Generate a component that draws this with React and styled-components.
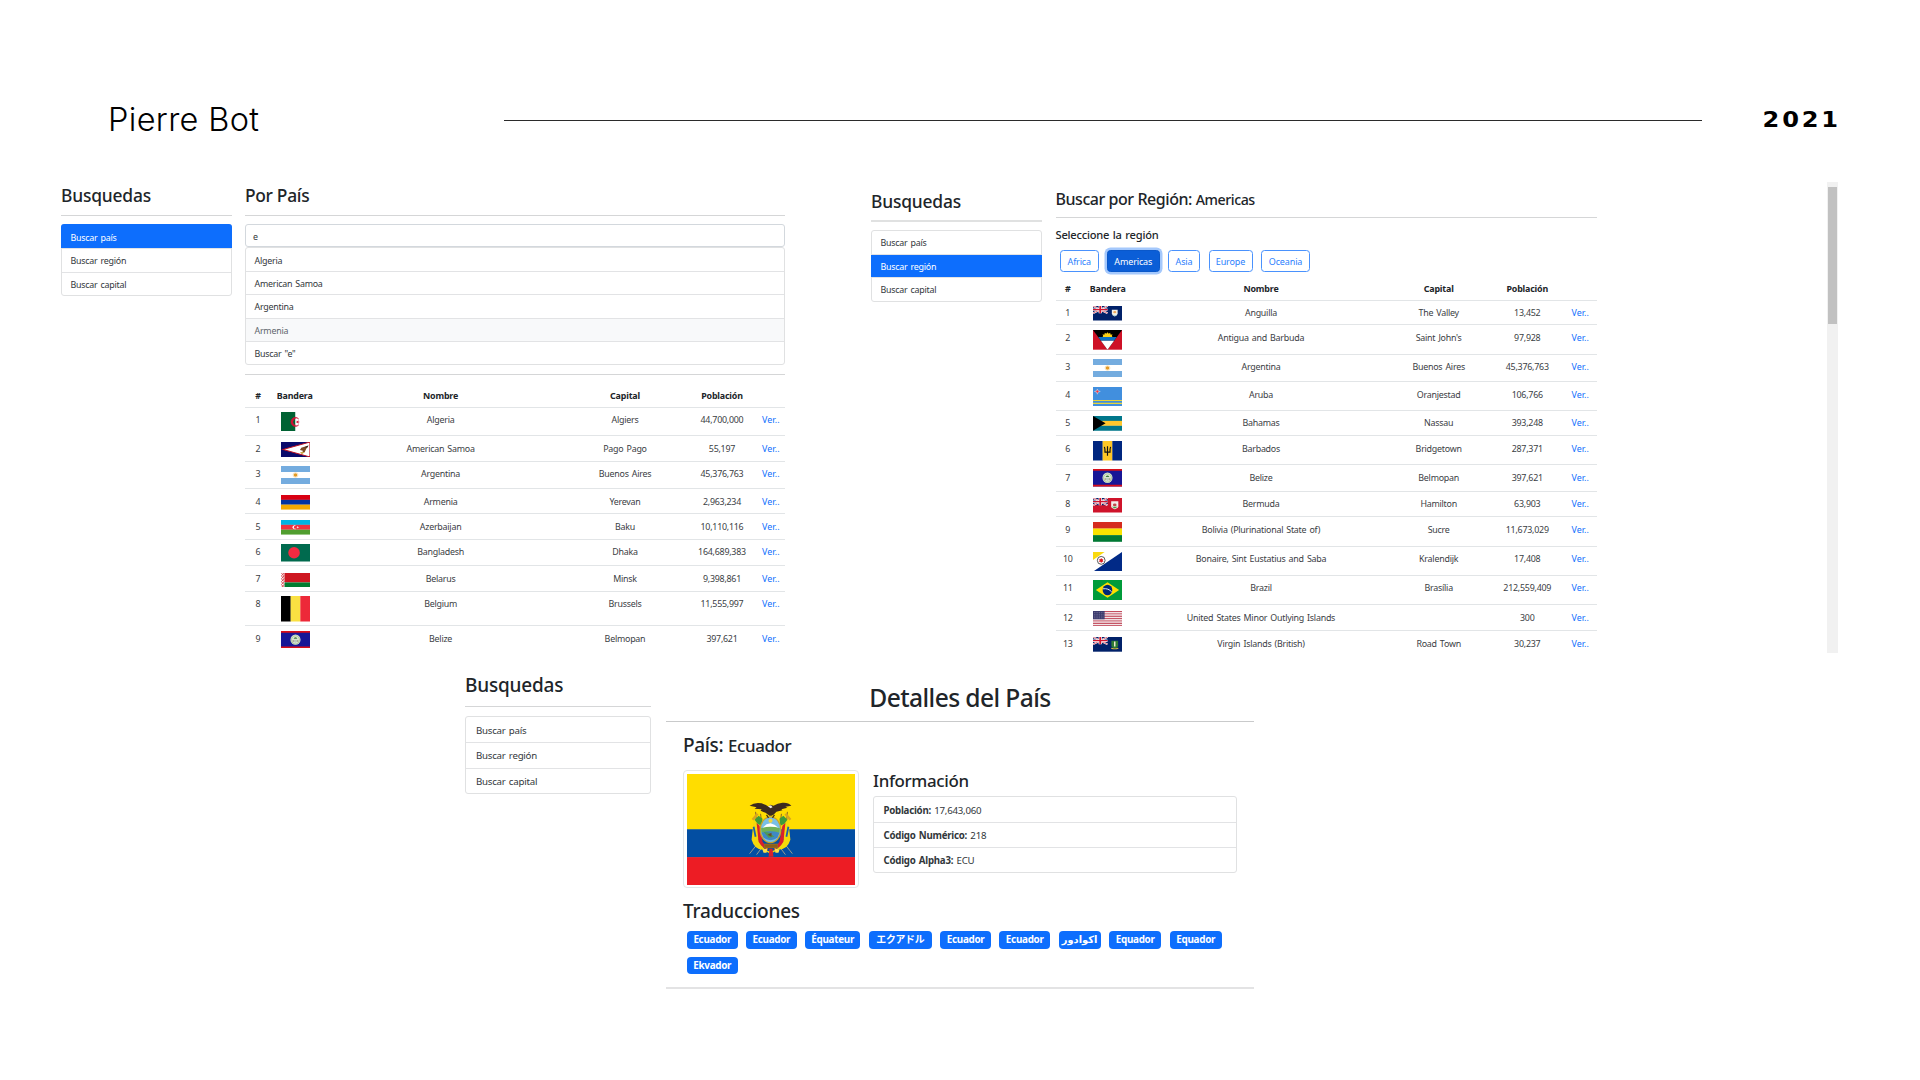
import React from "react";
import styled, { createGlobalStyle, css } from "styled-components";

const GlobalStyle = createGlobalStyle`
  *, *::before, *::after { box-sizing: border-box; }
  body {
    margin: 0;
    background: #fff;
    color: #212529;
    font-family: "Noto Sans", "Open Sans", "Noto Sans CJK JP", "DejaVu Sans", sans-serif;
    letter-spacing: -0.015em;
    word-spacing: 1px;
  }
`;

const Page = styled.div`
  width: 1920px;
  height: 1080px;
  display: flex;
  flex-direction: column;
  overflow: hidden;
  background: #fff;
`;

const Header = styled.header`
  height: 182px;
  flex: none;
  display: flex;
  align-items: center;
  padding: 58px 79px 0 108px;
`;

const Author = styled.div`
  width: 396px;
  font-family: Inter, sans-serif;
  font-weight: 300;
  font-size: 32.5px;
  line-height: 40px;
  letter-spacing: 0.01em;
  word-spacing: 0;
  color: #000;
`;

const Rule = styled.div`
  width: 1198px;
  height: 1px;
  margin-top: 1px;
  background: #2b2b2b;
`;

const Year = styled.div`
  margin-left: auto;
  font-family: "DejaVu Sans", sans-serif;
  font-weight: 700;
  font-size: 21.5px;
  line-height: 30px;
  letter-spacing: 2.5px;
  margin-right: 0;
  transform: scaleX(1.12);
  transform-origin: right center;
  color: #000;
`;

const TopRow = styled.section`
  height: 471px;
  flex: none;
  display: flex;
  padding: 0 82px 0 61px;
  overflow: hidden;
`;

const Panel = styled.div`
  display: flex;
  gap: ${(p) => p.$gap}px;
  margin-left: ${(p) => p.$left || 0}px;
`;

const Side = styled.aside`
  width: ${(p) => p.$w}px;
  flex: none;
`;

const Main = styled.main`
  width: ${(p) => p.$w}px;
  flex: none;
`;

const Heading = styled.h2`
  margin: 0 0 ${(p) => p.$b || 0}px;
  padding-top: ${(p) => p.$t || 0}px;
  font-weight: 500;
  font-size: ${(p) => p.$size}px;
  line-height: ${(p) => p.$h}px;
  text-align: ${(p) => (p.$center ? "center" : "left")};
  letter-spacing: ${(p) => p.$ls ?? -0.024}em;
  word-spacing: 0;
  white-space: nowrap;
`;

const Smaller = styled.span`
  font-size: ${(p) => p.$size}px;
  line-height: 1;
`;

const Hr = styled.hr`
  border: 0;
  margin: ${(p) => p.$t}px 0 ${(p) => p.$b}px;
  height: ${(p) => p.$thick || 1}px;
  background: ${(p) => p.$color || "#d5d6d7"};
`;

const List = styled.ul`
  list-style: none;
  margin: 0;
  padding: 0;
  height: ${(p) => p.$h}px;
  display: grid;
  grid-auto-rows: 1fr;
  border: 1px solid #e0e1e2;
  border-radius: 3px;
`;

const Item = styled.li`
  display: flex;
  align-items: center;
  padding: 1px 0 0 ${(p) => p.$pad || 8.5}px;
  font-size: ${(p) => p.$size || 8.9}px;
  color: #32373b;
  white-space: pre;
  & + & { border-top: 1px solid #e2e3e5; }
  ${(p) => p.$active && css`
    background: #0d6efd;
    color: #fff;
    margin: ${p.$first ? "-1px -1px 0" : "0 -1px"};
    border-radius: ${p.$first ? "3px 3px 0 0" : "0"};
    padding-top: ${p.$first ? 3 : 1}px;
    padding-left: ${(p.$pad || 8.5) + 1}px;
    && { border-top-color: #0d6efd; }
    & + & { border-top-color: #0d6efd; }
  `}
  ${(p) => p.$hover && css`
    background: #f8f9fa;
    color: #5f666c;
  `}
`;

const SearchBox = styled.div`
  height: 23px;
  display: flex;
  align-items: center;
  padding: 1px 0 0 7px;
  border: 1px solid #d3d8dd;
  border-radius: 3px;
  font-size: 8.9px;
  color: #32373b;
`;

const Table = styled.div`
  font-size: 8.9px;
  line-height: 17px;
  color: #3b4044;
  text-align: center;
`;

const Row = styled.div`
  display: grid;
  grid-template-columns: ${(p) => p.$cols};
  height: ${(p) => p.$h}px;
  padding-top: ${(p) => p.$t}px;
  border-bottom: 1px solid ${(p) => (p.$last ? "transparent" : "#e2e5e7")};
  white-space: nowrap;
`;

const HeadRow = styled(Row)`
  font-weight: 700;
  color: #212529;
  letter-spacing: -0.02em;
`;

const Link = styled.a`
  color: #0d6efd;
  letter-spacing: 0.01em;
`;

const FlagCell = styled.div`
  display: flex;
  justify-content: center;
  align-items: flex-start;
  height: 0;
  margin-top: ${(p) => p.$dy}px;
  padding-left: ${(p) => p.$shift || 0}px;
`;

const Label = styled.div`
  font-weight: 500;
  font-size: 11.1px;
  line-height: 20px;
  height: 25px;
  letter-spacing: -0.02em;
`;

const Regions = styled.div`
  display: flex;
  height: 22px;
  padding-left: 4.5px;
  gap: 8.5px;
`;

const RegionButton = styled.button`
  width: ${(p) => p.$w}px;
  height: 22px;
  padding: 0;
  font: inherit;
  font-size: 9px;
  letter-spacing: -0.015em;
  border: 1px solid #4a92fd;
  border-radius: 3.5px;
  background: #fff;
  color: #2b80fd;
  ${(p) => p.$active && css`
    background: #0b5ed7;
    border-color: #0a58ca;
    color: #fff;
    box-shadow: 0 0 0 2.5px #a4c8fc;
  `}
`;

const ScrollTrack = styled.div`
  width: 11px;
  height: 471px;
  margin-left: auto;
  padding: 5px 1px 0;
  background: #f1f1f1;
`;

const ScrollThumb = styled.div`
  height: 137px;
  background: #c1c1c1;
`;

const DetailRow = styled.section`
  display: flex;
  padding-left: 465px;
  gap: 15px;
`;

const DetailBody = styled.div`
  padding: 0 17px;
`;

const DetailColumns = styled.div`
  display: flex;
  gap: 14px;
  height: 118px;
`;

const Thumb = styled.div`
  width: 176px;
  height: 118px;
  padding: 3px;
  border: 1px solid #e3e6e8;
  border-radius: 4px;
  svg { display: block; }
`;

const Info = styled.div`
  width: 365px;
`;

const Badges = styled.div`
  display: flex;
  flex-wrap: wrap;
  gap: 8px 8.6px;
  padding-left: 4px;
  height: 56px;
  align-content: flex-start;
`;

const Badge = styled.span`
  width: ${(p) => p.$w}px;
  height: 17.5px;
  border-radius: 4px;
  background: #0d6efd;
  color: #fff;
  font-weight: 700;
  font-size: 9.9px;
  line-height: 17px;
  text-align: center;
  letter-spacing: -0.03em;
  white-space: nowrap;
`;

const Strip = ({ colors, vertical }) =>
  colors.map((c, i) =>
    vertical ? (
      <rect key={i} x={(30 * i) / colors.length} width={30 / colors.length + 0.1} height="20" fill={c} />
    ) : (
      <rect key={i} y={(20 * i) / colors.length} width="30" height={20 / colors.length + 0.1} fill={c} />
    )
  );

const UnionJack = () => (
  <g>
    <rect width="15" height="10" fill="#012169" />
    <path d="M0 0L15 10M15 0L0 10" stroke="#fff" strokeWidth="2.2" />
    <path d="M0 0L15 10M15 0L0 10" stroke="#d8324a" strokeWidth=".8" />
    <path d="M7.5 0V10M0 5H15" stroke="#fff" strokeWidth="3.4" />
    <path d="M7.5 0V10M0 5H15" stroke="#d0142f" strokeWidth="1.9" />
  </g>
);

const Belize = () => (
  <g>
    <rect width="30" height="20" fill="#171696" />
    <path d="M0 1H30M0 19H30" stroke="#d90f19" strokeWidth="2" />
    <ellipse cx="15" cy="10" rx="5.2" ry="6" fill="#dfe9d6" />
    <ellipse cx="15" cy="10.3" rx="4" ry="4.7" fill="none" stroke="#8db47d" strokeWidth=".7" />
    <path d="M12.8 10h4.4v2L15 13.8 12.8 12z" fill="#b9cbbd" />
    <path d="M13 9q2-3.4 4 0z" fill="#3e7b3a" />
    <path d="M12.6 10.5v2.5M17.4 10.5v2.5" stroke="#8a6a4c" strokeWidth=".7" />
  </g>
);

const FLAGS = {
  dz: (
    <g>
      <rect width="15" height="20" fill="#006233" />
      <rect x="15" width="15" height="20" fill="#fff" />
      <path d="M18.4 7.2A4.6 4.7 0 1 0 18.4 13.2A3.7 3.8 0 1 1 18.4 7.2z" fill="#d21034" stroke="#d21034" strokeWidth=".5" />
      <path d="M19.6 10.2l-4 1.2 2.4-3.2v4l-2.4-3.2z" fill="#d21034" />
    </g>
  ),
  as: (
    <g>
      <rect width="30" height="20" fill="#0a0a6b" />
      <path d="M30 0L2 10L30 20z" fill="#fff" stroke="#bd1021" strokeWidth="1.2" />
      <path d="M21 7.5L28.4 4.5L26 9.2L24.5 13.6L22 14.6L22.6 11.6L19.6 10.5z" fill="#7d4a25" />
      <path d="M24 7L28.4 4.5L27.4 7.4z" fill="#35251c" />
      <path d="M19.6 13.2l5 .6-3 2.6z" fill="#c9a03c" />
    </g>
  ),
  ar: (
    <g>
      <Strip colors={["#74acdf", "#fff", "#74acdf"]} />
      <circle cx="15" cy="10" r="1.9" fill="#e39a26" />
      <circle cx="15" cy="10" r="2.5" fill="none" stroke="#f0c36b" strokeWidth=".5" />
    </g>
  ),
  am: <Strip colors={["#d90012", "#0033a0", "#f2a800"]} />,
  az: (
    <g>
      <Strip colors={["#00b5e2", "#ef3340", "#509e2f"]} />
      <path d="M15.9 8A2.5 2.6 0 1 0 15.9 12A2 2.1 0 1 1 15.9 8z" fill="#fff" />
      <path d="M17.3 8.4l.5 1.1 1.2.5-1.2.5-.5 1.1-.5-1.1-1-.5 1-.5z" fill="#fff" />
    </g>
  ),
  bd: (
    <g>
      <rect width="30" height="20" fill="#006a4e" />
      <ellipse cx="13.5" cy="10" rx="6" ry="6.6" fill="#f42a41" />
    </g>
  ),
  by: (
    <g>
      <rect width="30" height="13" fill="#ce1720" />
      <rect y="13" width="30" height="7" fill="#007c30" />
      <rect width="3.6" height="20" fill="#fff" />
      <path d="M.4 0L3.2 4 .4 8 3.2 12 .4 16 3.2 20M3.2 0L.4 4 3.2 8 .4 12 3.2 16 .4 20" stroke="#cf3a40" strokeWidth="1" fill="none" />
    </g>
  ),
  be: <Strip vertical colors={["#000", "#fae042", "#ed2939"]} />,
  bz: <Belize />,
  ai: (
    <g>
      <rect width="30" height="20" fill="#012169" />
      <UnionJack />
      <path d="M19.5 5.2h6v5q0 3-3 4.2-3-1.2-3-4.2z" fill="#f4f1e6" />
      <circle cx="22.5" cy="8.5" r="1.6" fill="#f0a85a" />
      <path d="M20.4 12.2q2.1 1 4.2 0l-2.1 1.8z" fill="#8fd0da" />
    </g>
  ),
  ag: (
    <g>
      <rect width="30" height="20" fill="#ce1126" />
      <path d="M0 0H30L15 20z" fill="#000" />
      <path d="M9.5 7.5L10.5 6l-.6-1.6 1.8.3.6-1.8 1.4 1L15 2.2l1.3 1.7 1.4-1 .6 1.8 1.8-.3-.6 1.6 1 1.5z" fill="#fcd116" />
      <path d="M5.4 7.2H24.6L21.8 11H8.2z" fill="#0c72c6" />
      <path d="M8.2 11H21.8L15 20z" fill="#fff" />
    </g>
  ),
  aw: (
    <g>
      <rect width="30" height="20" fill="#418fde" />
      <path d="M0 14H30M0 17H30" stroke="#e8d53a" strokeWidth="1.1" />
      <path d="M4.5 2L5.3 4 7.5 4.6 5.3 5.3 4.5 7.5 3.7 5.3 1.5 4.6 3.7 4z" fill="#ef3340" stroke="#fff" strokeWidth=".4" />
    </g>
  ),
  bs: (
    <g>
      <Strip colors={["#00778b", "#ffc72c", "#00778b"]} />
      <path d="M0 0L13 10L0 20z" fill="#000" />
    </g>
  ),
  bb: (
    <g>
      <Strip vertical colors={["#00267f", "#ffc726", "#00267f"]} />
      <path d="M11.8 6q.8 2 .6 5.4H17.6q-.2-3.4.6-5.4M15 5.5V15" stroke="#111" strokeWidth="1.2" fill="none" />
    </g>
  ),
  bm: (
    <g>
      <rect width="30" height="20" fill="#cf142b" />
      <UnionJack />
      <path d="M18.8 4.5h7.4v7q0 2.6-3.7 4-3.7-1.4-3.7-4z" fill="#f3efe9" />
      <circle cx="22.5" cy="9.5" r="1.9" fill="#c4484a" />
      <path d="M19.4 12.2h6.2l-3.1 2.4z" fill="#4d9a4a" />
    </g>
  ),
  bo: <Strip colors={["#d52b1e", "#f9e300", "#007934"]} />,
  bq: (
    <g>
      <rect width="30" height="20" fill="#fff" />
      <path d="M30 0V20H0z" fill="#012a87" />
      <path d="M0 0H12L0 8z" fill="#f9d90f" />
      <circle cx="8.5" cy="8.5" r="4" fill="#fff" stroke="#444" strokeWidth=".9" />
      <path d="M8.5 6l.8 1.3h1.5l-.7 1.2.7 1.3H9.3l-.8 1.3-.8-1.3H6.2l.7-1.3-.7-1.2h1.5z" fill="#dc171d" />
    </g>
  ),
  br: (
    <g>
      <rect width="30" height="20" fill="#009b3a" />
      <path d="M15 2.2L27 10 15 17.8 3 10z" fill="#fedf00" />
      <ellipse cx="15" cy="10" rx="5" ry="5.2" fill="#002776" />
      <path d="M10.3 8.8Q16 8 19.4 12" stroke="#dfe9f2" strokeWidth="1" fill="none" />
    </g>
  ),
  um: (
    <g>
      <Strip colors={["#c24d5e", "#f2e4e7", "#c24d5e", "#f2e4e7", "#c24d5e", "#f2e4e7", "#c24d5e", "#f2e4e7", "#c24d5e", "#f2e4e7", "#c24d5e", "#f2e4e7", "#c24d5e"]} />
      <rect width="12" height="10.8" fill="#3c3b6e" />
      <path d="M1 2H11.5M1 4.3H11.5M1 6.6H11.5M1 8.9H11.5" stroke="#8d8cab" strokeWidth=".8" strokeDasharray=".8 1" />
    </g>
  ),
  vg: (
    <g>
      <rect width="30" height="20" fill="#012169" />
      <UnionJack />
      <path d="M19 5h7v6.5q0 2.8-3.5 4.5-3.5-1.7-3.5-4.5z" fill="#2f7b34" />
      <path d="M22.5 6v7" stroke="#f1ead8" strokeWidth="1.5" />
      <path d="M18.8 15q3.7 2.4 7.4 0" stroke="#e2c13c" strokeWidth="1.2" fill="none" />
    </g>
  ),
};

const Flag = ({ code, h }) => (
  <svg width="29" height={h} viewBox="0 0 30 20" preserveAspectRatio="none">
    {FLAGS[code]}
  </svg>
);

const EcuadorFlag = () => (
  <svg width="168" height="111" viewBox="0 0 169 111.5" preserveAspectRatio="none">
    <rect width="169" height="56" fill="#ffdd00" />
    <rect y="55.5" width="169" height="28.5" fill="#034ea2" />
    <rect y="83.5" width="169" height="28" fill="#ed1c24" />
    <path d="M69 38L72 74M74 40L77 64M101 38L98 74M95 40L92 64" stroke="#6b4a2f" strokeWidth=".8" />
    <path d="M63 80L71 70M106 80L98 70M70 81L76 73M99 81L93 73" stroke="#a9a58c" strokeWidth=".9" />
    <path d="M67 47Q72 43 73 50L72 66Q76 76 84 78Q93 76 97 66L96 50Q98 43 102 47L104 66Q101 76 92 76L84 80L76 76Q68 76 65 66z" fill="#f5d90a" />
    <path d="M71 40L66 46M99 40L104 46" stroke="#d9a520" strokeWidth="2.5" />
    <path d="M70 49L72 68Q76 75 82 76L76 68L73 52zM99 49L97 68Q93 75 87 76L93 68L96 52z" fill="#d9202b" />
    <path d="M68 46L72 42 76 45 75 52 71 50zM101 46L97 42 93 45 94 52 98 50z" fill="#3f9b3b" />
    <path d="M67 53l2 10M102 53l-2 10" stroke="#1663ae" strokeWidth="1.8" />
    <ellipse cx="84" cy="56" rx="11" ry="13.5" fill="#c9a227" />
    <ellipse cx="84" cy="56" rx="9.7" ry="12.3" fill="#79bfe6" />
    <circle cx="84" cy="47" r="2" fill="#f4d63a" />
    <path d="M76 54L80 50.5 84 49.5 88 51 92 54z" fill="#fff" />
    <path d="M74.5 54.5Q84 51.5 93.5 54.5L93 59H75z" fill="#6fb157" />
    <path d="M75 59Q84 56 93 59L91 64Q84 69 77 64z" fill="#3f88c5" />
    <path d="M77 58L83 59 88 63 82 64z" fill="#4e9a55" />
    <path d="M81 61l4-2v4z" fill="#6a4a30" />
    <path d="M63 32Q68 28 75 29.5Q80 31 82 33L84 31 87 32Q91 29.5 96 29Q102 28.5 105 32L99 33 101 34 95 35.5 96 36.5 90 38 87 41 85 42 83 42 79 39 74 37 75 35.5 68 35 70 33.5z" fill="#3c2a20" />
    <path d="M81.5 32.5l3-1.2 1.5 2-2 1.2z" fill="#efe9e1" />
    <path d="M80 41l2 3M88 41l-2 3" stroke="#3c2a20" strokeWidth="1.2" />
    <path d="M77.5 70H91.5V74.5H77.5z" fill="#a0701f" />
    <path d="M78 71.5H91M78 73.2H91" stroke="#6c4512" strokeWidth=".6" />
    <path d="M76 76L81 74.5 80 79 77 79zM93 76L88 74.5 89 79 92 79z" fill="#ffe14a" />
    <path d="M83 75h3l1 8h-5z" fill="#d9202b" />
  </svg>
);

const MENU = ["Buscar país", "Buscar región", "Buscar capital"];

const Menu = ({ active, h, pad, size }) => (
  <List $h={h}>
    {MENU.map((label, i) => (
      <Item key={label} $active={i === active} $first={i === 0} $pad={pad} $size={size}>
        {label}
      </Item>
    ))}
  </List>
);

const CountryTable = ({ cols, headH, headT, rows, flagShift }) => (
  <Table>
    <HeadRow $cols={cols} $h={headH} $t={headT}>
      <span>#</span>
      <span>Bandera</span>
      <span>Nombre</span>
      <span>Capital</span>
      <span>Población</span>
      <span />
    </HeadRow>
    {rows.map(([h, t, flagTop, flagH, code, name, capital, population], i) => (
      <Row key={code} $cols={cols} $h={h} $t={t} $last={i === rows.length - 1}>
        <span>{i + 1}</span>
        <FlagCell $dy={flagTop - t} $shift={flagShift}>
          <Flag code={code} h={flagH} />
        </FlagCell>
        <span>{name}</span>
        <span>{capital}</span>
        <span>{population}</span>
        <Link>Ver..</Link>
      </Row>
    ))}
  </Table>
);

/* row height, text offset, flag offset, flag height, code, name, capital, population */
const BY_NAME = [
  [28, 3, 3.5, 19.5, "dz", "Algeria", "Algiers", "44,700,000"],
  [26, 4, 6, 15, "as", "American Samoa", "Pago Pago", "55,197"],
  [27, 3, 4, 18, "ar", "Argentina", "Buenos Aires", "45,376,763"],
  [25, 4, 6, 14.5, "am", "Armenia", "Yerevan", "2,963,234"],
  [26, 4, 6.3, 14.5, "az", "Azerbaijan", "Baku", "10,110,116"],
  [26, 3, 4, 17.5, "bd", "Bangladesh", "Dhaka", "164,689,383"],
  [26, 4, 6.7, 14.5, "by", "Belarus", "Minsk", "9,398,861"],
  [34, 3, 4, 25.5, "be", "Belgium", "Brussels", "11,555,997"],
  [27, 4, 5, 17.3, "bz", "Belize", "Belmopan", "397,621"],
];

const BY_REGION = [
  [24, 3, 5, 14.5, "ai", "Anguilla", "The Valley", "13,452"],
  [30, 4, 5, 19.7, "ag", "Antigua and Barbuda", "Saint John's", "97,928"],
  [27, 3, 4, 18, "ar", "Argentina", "Buenos Aires", "45,376,763"],
  [29, 4, 5, 19.3, "aw", "Aruba", "Oranjestad", "106,766"],
  [25, 3, 5.3, 14.7, "bs", "Bahamas", "Nassau", "393,248"],
  [29, 4, 5, 19.5, "bb", "Barbados", "Bridgetown", "287,371"],
  [27, 4, 4.3, 17.5, "bz", "Belize", "Belmopan", "397,621"],
  [25, 3, 6, 14.5, "bm", "Bermuda", "Hamilton", "63,903"],
  [30, 4, 5, 19.7, "bo", "Bolivia (Plurinational State of)", "Sucre", "11,673,029"],
  [29, 3, 4.5, 19.7, "bq", "Bonaire, Sint Eustatius and Saba", "Kralendijk", "17,408"],
  [29, 3, 4, 20, "br", "Brazil", "Brasília", "212,559,409"],
  [26, 4, 5.5, 15.3, "um", "United States Minor Outlying Islands", "", "300"],
  [24, 4, 6, 14.7, "vg", "Virgin Islands (British)", "Road Town", "30,237"],
];

const REGIONS = [["Africa", 38.5], ["Americas", 52.5], ["Asia", 32], ["Europe", 44], ["Oceania", 49]];

const BADGES = [
  ["Ecuador", 50.5], ["Ecuador", 50.5], ["Équateur", 55], ["エクアドル", 63], ["Ecuador", 50.5],
  ["Ecuador", 50.5], ["اکوادور", 42], ["Equador", 52], ["Equador", 52], ["Ekvador", 50.5],
];

export default function App() {
  return (
    <Page>
      <GlobalStyle />
      <Header>
        <Author>Pierre Bot</Author>
        <Rule />
        <Year>2021</Year>
      </Header>

      <TopRow>
        <Panel $gap={13}>
          <Side $w={171}>
            <Heading $size={17.4} $h={27} $ls={-0.01}>Busquedas</Heading>
            <Hr $t={6} $b={8} />
            <Menu active={0} h={72} />
          </Side>
          <Main $w={540}>
            <Heading $size={17.4} $h={27} $ls={-0.018}>Por País</Heading>
            <Hr $t={6} $b={8} />
            <SearchBox>e</SearchBox>
            <List $h={118}>
              {["Algeria", "American Samoa", "Argentina", "Armenia", 'Buscar "e"'].map((s) => (
                <Item key={s} $hover={s === "Armenia"}>{s}</Item>
              ))}
            </List>
            <Hr $t={9} $b={0} />
            <CountryTable
              cols="26px 47.5px 244.2px 124.6px 69.4px 28.3px"
              headH={33}
              headT={12}
              rows={BY_NAME}
              flagShift={1}
            />
          </Main>
        </Panel>

        <Panel $gap={13.5} $left={86}>
          <Side $w={171}>
            <Heading $size={17.4} $h={38} $ls={-0.01}>Busquedas</Heading>
            <Hr $t={0} $b={7.5} $thick={2} $color="#e0e1e1" />
            <Menu active={1} h={72} />
          </Side>
          <Main $w={541}>
            <Heading $size={16} $h={34} $ls={-0.028}>
              Buscar por Región: <Smaller $size={14.2}>Americas</Smaller>
            </Heading>
            <Hr $t={1} $b={7} />
            <Label>Seleccione la región</Label>
            <Regions>
              {REGIONS.map(([name, w]) => (
                <RegionButton key={name} $w={w} $active={name === "Americas"}>{name}</RegionButton>
              ))}
            </Regions>
            <CountryTable
              cols="24.5px 55.4px 251.2px 104.2px 73px 33px"
              headH={29}
              headT={8}
              rows={BY_REGION}
            />
          </Main>
        </Panel>

        <ScrollTrack>
          <ScrollThumb />
        </ScrollTrack>
      </TopRow>

      <DetailRow>
        <Side $w={186}>
          <Heading $size={19} $t={12} $h={41} $ls={-0.011}>Busquedas</Heading>
          <Hr $t={0} $b={9} />
          <Menu h={78} pad={10} size={9.7} />
        </Side>
        <Main $w={588}>
          <Heading as="h1" $center $size={24.6} $t={21} $h={47}>Detalles del País</Heading>
          <Hr $t={0} $b={0} $color="#c9cacb" />
          <DetailBody>
            <Heading $size={19} $h={46} $b={2} $ls={-0.018}>
              País: <Smaller $size={16.9}>Ecuador</Smaller>
            </Heading>
            <DetailColumns>
              <Thumb>
                <EcuadorFlag />
              </Thumb>
              <Info>
                <Heading as="h3" $size={16.9} $h={22} $b={4} $ls={-0.02}>Información</Heading>
                <List $h={77}>
                  <Item $pad={9.5} $size={9.7}><b>Población:</b> 17,643,060</Item>
                  <Item $pad={9.5} $size={9.7}><b>Código Numérico:</b> 218</Item>
                  <Item $pad={9.5} $size={9.7}><b>Código Alpha3:</b> ECU</Item>
                </List>
              </Info>
            </DetailColumns>
            <Heading $size={19} $t={4} $h={39} $ls={-0.011}>Traducciones</Heading>
            <Badges>
              {BADGES.map(([text, w], i) => (
                <Badge key={i} $w={w}>{text}</Badge>
              ))}
            </Badges>
          </DetailBody>
          <Hr $t={0} $b={0} $thick={2} $color="#e3e3e4" />
        </Main>
      </DetailRow>
    </Page>
  );
}
